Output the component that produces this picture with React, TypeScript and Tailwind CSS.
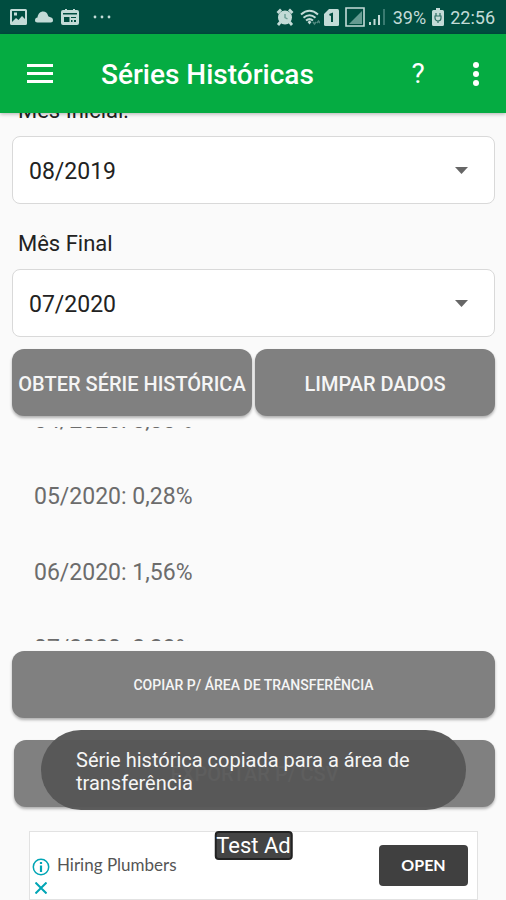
import type { ReactNode } from "react";

interface MonthSelectProps {
  id: string;
  label: string;
  value: string;
}

const months = ["08/2019", "05/2020", "06/2020", "07/2020"];

const rates = [
  { month: "04/2020", rate: "0,80%" },
  { month: "05/2020", rate: "0,28%" },
  { month: "06/2020", rate: "1,56%" },
  { month: "07/2020", rate: "2,23%" },
];

function MonthSelect({ id, label, value }: MonthSelectProps) {
  return (
    <div>
      <label htmlFor={id} className="block px-1.5 pb-[11px] text-[22px] leading-7 text-[#222]">
        {label}
      </label>
      <div className="relative">
        <select
          id={id}
          defaultValue={value}
          className="block h-[68px] w-full appearance-none rounded-lg border border-[#d9d9d9] bg-white px-4 pt-1 text-[23px] text-[#222]"
        >
          {months.map((month) => (
            <option key={month}>{month}</option>
          ))}
        </select>
        <svg className="pointer-events-none absolute top-[31px] right-[27px] h-[7px] w-[13px]" viewBox="0 0 13 7" fill="#666">
          <path d="M0 0h13L6.500 7z" />
        </svg>
      </div>
    </div>
  );
}

function ActionButton({ className, children }: { className: string; children: ReactNode }) {
  return (
    <button
      type="button"
      className={`h-[67px] rounded-xl bg-[#808080] font-medium whitespace-nowrap text-[#f5f5f5] uppercase shadow-[0_2px_3px_rgba(0,0,0,0.3)] ${className}`}
    >
      {children}
    </button>
  );
}

function StatusBar() {
  return (
    <div className="flex h-[34px] items-center justify-between bg-[#004d40] pr-[11px] pl-2.5 text-[#c3dbd7]">
      <div className="flex items-center gap-2">
        <svg className="h-4 w-[17px]" viewBox="0 0 17 16" fill="currentColor">
          <path fillRule="evenodd" d="M1.500 0h14A1.500 1.500 0 0 1 17 1.500v13a1.500 1.500 0 0 1-1.500 1.500h-14A1.500 1.500 0 0 1 0 14.500v-13A1.500 1.500 0 0 1 1.500 0zM2 2v11l4-4 2.500 2L12 7l3 3V2zM4 3.500h3v3H4z" />
        </svg>
        <svg className="h-3 w-[18px]" viewBox="0 0 18 12" fill="currentColor">
          <path d="M2.500 11.500C.8 11.500 0 10.500 0 9.200c0-1.500 1-2.500 2.500-2.700C3 2.500 5.500.5 8 .5c2.700 0 4.300 1.500 5 4 .3 1 .9 1.300 1.800 1.500 2 .4 3.200 1.500 3.200 3.200 0 1.300-.8 2.300-2.200 2.300z" />
        </svg>
        <svg className="h-4 w-[18px]" viewBox="0 0 18 16" fill="currentColor">
          <path fillRule="evenodd" d="M2 1h2V0h2v1h6V0h2v1h2a2 2 0 0 1 2 2v11a2 2 0 0 1-2 2H2a2 2 0 0 1-2-2V3a2 2 0 0 1 2-2zM2 4v1.500h14V4zM3 8v5h5.500V8zM10 8v1h5V8zM10 11v2h1.500v-2zM13 11v2h2v-2z" />
        </svg>
        <svg className="ml-1.5 h-1 w-[18px]" viewBox="0 0 18 4" fill="currentColor">
          <circle cx="2" cy="2" r="1.400" />
          <circle cx="9" cy="2" r="1.400" />
          <circle cx="16" cy="2" r="1.400" />
        </svg>
      </div>
      <div className="flex items-center gap-1.5 text-lg">
        <svg className="h-[18px] w-[18px]" viewBox="0 0 18 18">
          <circle cx="9" cy="9.500" r="7" fill="currentColor" />
          <path d="M1.500 5 5 1.500M13 1.500 16.500 5M4.500 14 2 17M13.500 14l2.500 3" stroke="currentColor" strokeWidth="2.800" />
          <path d="M9 6v3.500l2.500 1.500" stroke="#6b9e95" strokeWidth="1.400" fill="none" />
        </svg>
        <svg className="h-[17px] w-5" viewBox="0 0 20 17" fill="none" stroke="currentColor" strokeWidth="2">
          <path d="M1 5.500q8.500-7.500 17 0M3.500 8.700q6-5 12 0M6 11.500q3.500-2.800 7 0" />
          <path d="m7.500 13 2-1.500 2 1.500-2 2.500z" fill="currentColor" stroke="none" />
          <path d="m13 13 1.500 2 1.500-2M17 14l1.500-2 1.500 2" stroke="#4f887e" strokeWidth="1.500" />
        </svg>
        <svg className="-ml-0.5 h-[17px] w-[15px]" viewBox="0 0 15 17">
          <path d="M5 0h8.500A1.500 1.500 0 0 1 15 1.500v14a1.500 1.500 0 0 1-1.500 1.500h-12A1.500 1.500 0 0 1 0 15.500V5z" fill="currentColor" />
          <path d="M5.500 6 8 5v8" stroke="#004d40" strokeWidth="2" fill="none" />
        </svg>
        <svg className="h-5 w-5" viewBox="0 0 20 20">
          <path d="M1 1h18v18H1z" fill="none" stroke="currentColor" strokeWidth="1.600" />
          <path d="M17 4v13H4z" fill="#659b91" />
        </svg>
        <svg className="-ml-0.5 h-4 w-[18px]" viewBox="0 0 18 16" strokeWidth="2" stroke="currentColor">
          <path d="M1 13v3M5.500 10v6M10 6v10" />
          <path d="M15 0v16" stroke="#397a70" />
        </svg>
        <span className="pt-0.5 leading-8">39%</span>
        <svg className="h-[18px] w-3" viewBox="0 0 12 18">
          <path d="M4 0h4v2h2.500A1.500 1.500 0 0 1 12 3.500v13a1.500 1.500 0 0 1-1.500 1.500h-9A1.500 1.500 0 0 1 0 16.500v-13A1.500 1.500 0 0 1 1.500 2H4z" fill="currentColor" />
          <path d="M4 5v3M8 5v3M3 8h6v2a3 3 0 0 1-6 0zM6 13v2" stroke="#2e7064" strokeWidth="1.200" fill="none" />
        </svg>
        <span className="pt-0.5 leading-8">22:56</span>
      </div>
    </div>
  );
}

function AppBar() {
  return (
    <header className="relative z-10 flex h-[79px] items-center bg-[#05ac42] pr-3.5 pl-[27px] text-white shadow-[0_1px_4px_rgba(0,0,0,0.3)]">
      <button type="button" aria-label="Menu">
        <svg className="block h-[19px] w-[26px]" viewBox="0 0 26 19" fill="currentColor">
          <path d="M0 0h26v3H0zM0 8h26v3H0zM0 16h26v3H0z" />
        </svg>
      </button>
      <h1 className="ml-12 flex-1 pt-0.5 text-[28px] leading-8 font-medium whitespace-nowrap">Séries Históricas</h1>
      <button type="button" aria-label="Ajuda" className="w-8 text-[28px] leading-8">
        ?
      </button>
      <button type="button" aria-label="Mais opções" className="ml-[26px] flex w-8 justify-center">
        <svg className="h-6 w-1.5" viewBox="0 0 6 24" fill="currentColor">
          <circle cx="3" cy="3" r="3" />
          <circle cx="3" cy="12" r="3" />
          <circle cx="3" cy="21" r="3" />
        </svg>
      </button>
    </header>
  );
}

function AdBanner() {
  return (
    <aside className="relative mr-7 ml-[29px] flex h-[69px] items-center border border-[#e2e2e2] bg-white pr-[9px] pl-0.5">
      <div className="mt-5 flex w-[18px] flex-col items-center gap-1.5">
        <svg className="h-[18px] w-[18px]" viewBox="0 0 18 18" fill="none" stroke="#00a5b5">
          <circle cx="9" cy="9" r="7.700" strokeWidth="1.500" />
          <path d="M9 4v2M9 7.500V14" strokeWidth="2.200" />
        </svg>
        <button type="button" aria-label="Fechar anúncio">
          <svg className="block h-3 w-3" viewBox="0 0 12 12" stroke="#00a5b5" strokeWidth="2">
            <path d="m.5.500 11 11M11.500.500l-11 11" />
          </svg>
        </button>
      </div>
      <a href="#" className="ml-[7px] flex-1 pb-0.5 font-['Lato',sans-serif] text-[17px] leading-6 whitespace-nowrap text-[#555]">
        Hiring Plumbers
      </a>
      <span className="absolute -top-px left-1/2 -translate-x-1/2 rounded border-2 border-[#222] bg-[#444] text-[22px] leading-[25px] whitespace-nowrap text-white">
        Test Ad
      </span>
      <button type="button" className="h-[41px] w-[89px] rounded bg-[#404040] pb-0.5 font-['Lato',sans-serif] text-base font-bold text-white">
        OPEN
      </button>
    </aside>
  );
}

export default function App() {
  return (
    <div className="min-h-screen bg-[#fafafa] font-['Roboto',sans-serif]">
      <StatusBar />
      <AppBar />
      <main className="overflow-hidden">
        {/* Form is scrolled a little, so the first label sits under the app bar */}
        <form className="-mt-4 pr-[11px] pl-3">
          <div className="flex flex-col gap-[26px]">
            <MonthSelect id="start" label="Mês Inicial:" value="08/2019" />
            <MonthSelect id="end" label="Mês Final" value="07/2020" />
          </div>
          <div className="mt-3 grid grid-cols-2 gap-[3px]">
            <ActionButton className="pt-0.5 text-[20px]">Obter série histórica</ActionButton>
            <ActionButton className="pt-0.5 text-[20px]">Limpar dados</ActionButton>
          </div>
          <div className="mt-[11px] h-[214px] overflow-hidden">
            <ul className="-mt-11 px-[22px] text-[23px] text-[#6c6c6c]">
              {rates.map(({ month, rate }) => (
                <li key={month} className="flex h-[76px] items-center">
                  {month}: {rate}
                </li>
              ))}
            </ul>
          </div>
          <ActionButton className="mt-2.5 w-full text-sm">Copiar p/ área de transferência</ActionButton>
          <div className="relative mt-[22px] flex pl-0.5">
            <ActionButton className="flex-1 text-[20px]">Exportar p/ CSV</ActionButton>
            <div
              role="status"
              className="absolute -top-2.5 right-[29px] -bottom-[3px] left-[29px] flex items-center rounded-[40px] bg-[#555]/95 pt-1 pr-12 pl-[35px] text-[20px] leading-[23px] text-[#f5f5f5]"
            >
              Série histórica copiada para a área de transferência
            </div>
          </div>
        </form>
        <div className="pt-6">
          <AdBanner />
        </div>
      </main>
    </div>
  );
}
